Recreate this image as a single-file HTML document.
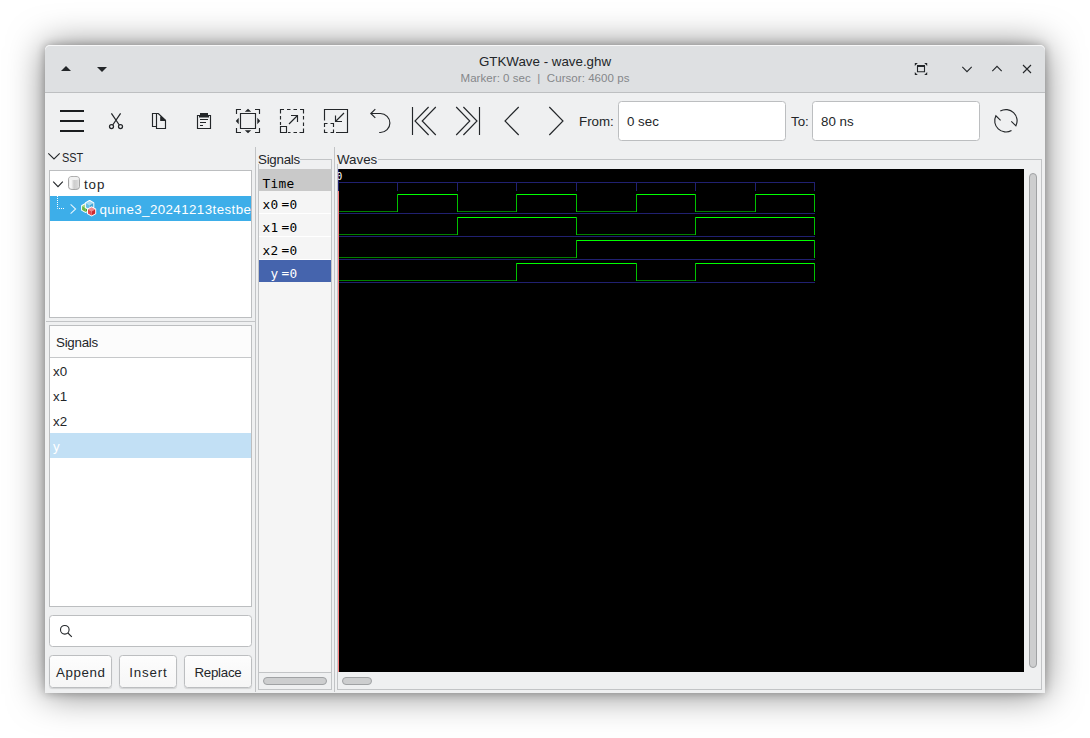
<!DOCTYPE html>
<html lang="en">
<head>
<meta charset="utf-8">
<title>GTKWave - wave.ghw</title>
<style>
html,body{margin:0;padding:0;}
body{width:1090px;height:738px;background:#fff;position:relative;overflow:hidden;
  font-family:"Liberation Sans","DejaVu Sans",sans-serif;font-size:13.33px;color:#232629;}
*{box-sizing:border-box;}
.abs{position:absolute;}
#win{position:absolute;left:45px;top:45px;width:1000px;height:648px;background:#eff0f1;
  border-radius:5px 5px 0 0;box-shadow:0 0 10px rgba(0,0,0,.28), 0 1px 36px rgba(0,0,0,.5);}
#titlebar{position:absolute;left:0;top:0;width:1000px;height:48px;background:#dee0e2;
  border-radius:5px 5px 0 0;border-bottom:1px solid #bdbfc1;box-shadow:inset 0 1px 0 rgba(255,255,255,.75);}
#title{position:absolute;left:0;width:1000px;top:9px;text-align:center;line-height:16px;color:#232629;}
#subtitle{position:absolute;left:0;width:1000px;top:26px;text-align:center;font-size:11.5px;line-height:14px;color:#85878a;white-space:pre;letter-spacing:.05px;}
.lbl{position:absolute;white-space:nowrap;line-height:16px;}
.entry{position:absolute;background:#fff;border:1px solid #bcbec0;border-radius:3.5px;}
.box{position:absolute;background:#fff;border:1px solid #bcbec0;overflow:hidden;}
.btn{position:absolute;background:linear-gradient(#fdfdfd,#f6f6f6);border:1px solid #bcbec0;border-radius:3.5px;text-align:center;line-height:33px;height:33px;top:610px;box-shadow:0 1px 1px rgba(0,0,0,.12);}
svg{position:absolute;overflow:visible;}
.mono{font-family:"DejaVu Sans Mono","Liberation Mono",monospace;font-size:12.8px;letter-spacing:.3px;color:#000;}
.mono .lbl{top:5.5px;}
.vline{position:absolute;width:1px;background:#c2c4c6;}
.hline{position:absolute;height:1px;background:#c2c4c6;}
</style>
</head>
<body>
<div id="win">
  <div id="titlebar">
    <div id="title">GTKWave - wave.ghw</div>
    <div id="subtitle">Marker: 0 sec  |  Cursor: 4600 ps</div>
    <svg style="left:0;top:0" width="1000" height="48" viewBox="45 45 1000 48">
      <path d="M61 71 L66 66 L71 71 Z" fill="#232629"/>
      <path d="M97 67 L107 67 L102 72 Z" fill="#232629"/>
      <g fill="none" stroke="#232629" stroke-width="1.1">
        <path d="M917.5 66 V71.7 H924.5 V66" stroke-width="1.1"/>
        <path d="M917 66 H925" stroke-width="2"/>
        <path d="M914.8 66 V63 H917.8 Z M927.2 66 V63 H924.2 Z M914.8 72 V75 H917.8 Z M927.2 72 V75 H924.2 Z" fill="#232629" stroke="none"/>
        <path d="M962.3 66.9 L967 71.6 L971.7 66.9"/>
        <path d="M992.3 71.1 L997 66.4 L1001.7 71.1"/>
        <path d="M1023 65 L1031 73 M1031 65 L1023 73"/>
      </g>
    </svg>
  </div>
  <!-- toolbar -->
  <svg id="tb" style="left:0;top:48px" width="1000" height="58" viewBox="45 93 1000 58" fill="none" stroke="#232629" stroke-width="1.15">
    <!-- menu -->
    <path d="M60 111 h24 M60 121 h24 M60 131 h24" stroke-width="2" stroke="#1b1e20"/>
    <!-- cut -->
    <g stroke-width="1.25">
      <path d="M111.4 113.3 L119.3 125 M120.6 113.3 L112.7 125"/>
      <circle cx="111.5" cy="126.5" r="2"/>
      <circle cx="120.5" cy="126.5" r="2"/>
    </g>
    <!-- copy -->
    <g>
      <path d="M156.5 126.5 H152.5 V113.5 H158.3 L165.5 120.3 V128.5 H156.5 V113.5"/>
      <path d="M159 113.8 L165.8 120.6 H160.8 V116.2 Z" fill="#232629" stroke="none"/>
      <path d="M160.8 116.5 V120.5 H165.5" />
    </g>
    <!-- paste -->
    <g>
      <path d="M197.5 115.5 H210.5 V128.5 H197.5 Z"/>
      <path d="M200 113 H208 V115 H209 V117.6 H199 V115 H200 Z" fill="#232629" stroke="none"/>
      <path d="M200 119.5 H208 M200 122.5 H206 M200 125.5 H203"/>
    </g>
    <!-- zoom fit -->
    <g>
      <path d="M236.5 114 V109.5 H241 M255 109.5 H259.5 V114 M259.5 128 V132.5 H255 M241 132.5 H236.5 V128"/>
      <path d="M240.5 113.5 H255.5 V128.5 H240.5 Z"/>
      <path d="M244.8 111.7 L248 108.8 L251.2 111.7 Z M244.8 130.3 L248 133.2 L251.2 130.3 Z M238.7 117.8 L235.8 121 L238.7 124.2 Z M257.3 117.8 L260.2 121 L257.3 124.2 Z" fill="#232629" stroke="none"/>
    </g>
    <!-- zoom in -->
    <g>
      <path d="M280.5 113.5 V109.5 H284 M287 109.5 H290.5 M293.5 109.5 H297 M300 109.5 H303.5 V113.5 M303.5 116 V119.5 M303.5 122.5 V126 M303.5 128.5 V132.5 H299.5 M297 132.5 H293.5 M290.5 132.5 H288 M280.5 116 V119.5 M280.5 122 V125"/>
      <path d="M280.5 126.5 H286.5 V132.5 H280.5 Z"/>
      <path d="M289 124 L297.5 115.5 M291 115.5 H297.5 V122"/>
    </g>
    <!-- zoom out -->
    <g>
      <path d="M324.5 120.5 V109.5 H347.5 V132.5 H336"/>
      <path d="M324.5 127 V123.5 H327.5 M330.5 123.5 H333.5 V127 M333.5 129.5 V132.5 H330.5 M327.5 132.5 H324.5 V129.5"/>
      <path d="M344 113 L335.5 121.5 M335.5 115.5 V121.5 H342"/>
    </g>
    <!-- undo -->
    <g>
      <path d="M375.3 109.2 L370.8 113.5 L375.3 117.8 M370.8 113.5 H380.4 A9.5 9.5 0 0 1 380.4 132.5 H379.2"/>
    </g>
    <!-- first / last / prev / next -->
    <path d="M412.5 107 V135 M428.6 107 L415 121 L428.6 135 M435.8 107 L422.2 121 L435.8 135"/>
    <path d="M479.5 107 V135 M463.4 107 L477 121 L463.4 135 M456.2 107 L469.8 121 L456.2 135"/>
    <path d="M518.7 107 L505 121 L518.7 135"/>
    <path d="M549.3 107 L563 121 L549.3 135"/>
    <!-- reload -->
    <g>
      <path d="M1000.3 111.1 A11.2 11.2 0 0 1 1015.92 125.8 L1011.3 121.4"/>
      <path d="M1011.5 130.5 A11.2 11.2 0 0 1 995.88 115.8 L1000.6 120.3"/>
    </g>
  </svg>
  <div class="lbl" style="left:534px;top:69px">From:</div>
  <div class="entry" style="left:573px;top:56px;width:168px;height:40px"><div class="lbl" style="left:8px;top:12px">0 sec</div></div>
  <div class="lbl" style="left:746px;top:69px">To:</div>
  <div class="entry" style="left:767px;top:56px;width:168px;height:40px"><div class="lbl" style="left:8px;top:12px">80 ns</div></div>

  <!-- left pane -->
  <svg style="left:0;top:100px" width="20" height="20" viewBox="45 145 20 20" fill="none" stroke="#232629" stroke-width="1.1"><path d="M48.3 153.4 L54 159 L59.7 153.4"/></svg>
  <div class="lbl" style="left:17px;top:105px;transform:scaleX(.82);transform-origin:0 0">SST</div>
  <div class="box" style="left:4px;top:125px;width:203px;height:148px">
    <svg style="left:0;top:0" width="202" height="50" viewBox="50 171 202 50" fill="none" stroke="#232629" stroke-width="1.1">
      <path d="M53.2 181.6 L58 186.6 L62.8 181.6"/>
      <defs><linearGradient id="cyl" x1="0" x2="1" y1="0" y2="0"><stop offset="0" stop-color="#e4e4e4"/><stop offset=".22" stop-color="#fbfbfb"/><stop offset=".5" stop-color="#cdcdcd"/><stop offset=".8" stop-color="#d6d6d6"/><stop offset="1" stop-color="#eaeaea"/></linearGradient></defs>
      <rect x="68.5" y="176.5" width="11" height="13" rx="3.6" ry="2.8" fill="url(#cyl)" stroke="#a4a4a4" stroke-width="1"/>
      <ellipse cx="74" cy="178.4" rx="4.8" ry="1.6" fill="#f1f1f1" stroke="none"/>
    </svg>
    <div class="lbl" style="left:34px;top:6px;letter-spacing:.9px">top</div>
    <div class="abs" style="left:0;top:25px;width:201px;height:25px;background:#3daee9"></div>
    <svg style="left:0;top:25px" width="60" height="25" viewBox="50 196 60 25" fill="none">
      <path d="M57.5 196 V208.5 H64" stroke="#fff" stroke-width="1" stroke-dasharray="1 1"/>
      <path d="M70.6 204.4 L75.6 209 L70.6 213.6" stroke="#e4f3fc" stroke-width="1.1"/>
      <g><path d="M85.6 203.9 L89.1 205.9 L89.1 209.9 L85.6 211.9 L82.1 209.9 L82.1 205.9 Z" fill="#fff" stroke="#fff" stroke-width="2" stroke-linejoin="round"/><path d="M85.6 203.9 L89.1 205.9 L85.6 207.9 L82.1 205.9 Z" fill="#9fd67f" stroke="none"/><path d="M82.1 205.9 L85.6 207.9 L85.6 211.9 L82.1 209.9 Z" fill="#6ab944" stroke="none"/><path d="M89.1 205.9 L89.1 209.9 L85.6 211.9 L85.6 207.9 Z" fill="#4f9e30" stroke="none"/><path d="M89.6 200.9 L93.3 203.0 L93.3 207.3 L89.6 209.5 L85.9 207.3 L85.9 203.0 Z" fill="#fff" stroke="#fff" stroke-width="2" stroke-linejoin="round"/><path d="M89.6 200.9 L93.3 203.0 L89.6 205.2 L85.9 203.0 Z" fill="#a4dcf3" stroke="none"/><path d="M85.9 203.0 L89.6 205.2 L89.6 209.5 L85.9 207.3 Z" fill="#66bfe6" stroke="none"/><path d="M93.3 203.0 L93.3 207.3 L89.6 209.5 L89.6 205.2 Z" fill="#45a6d6" stroke="none"/><path d="M91.6 207.3 L95.2 209.3 L95.2 213.5 L91.6 215.5 L88.0 213.5 L88.0 209.3 Z" fill="#fff" stroke="#fff" stroke-width="2" stroke-linejoin="round"/><path d="M91.6 207.3 L95.2 209.3 L91.6 211.4 L88.0 209.3 Z" fill="#f08a8e" stroke="none"/><path d="M88.0 209.3 L91.6 211.4 L91.6 215.5 L88.0 213.5 Z" fill="#e2474c" stroke="none"/><path d="M95.2 209.3 L95.2 213.5 L91.6 215.5 L91.6 211.4 Z" fill="#cc2a30" stroke="none"/></g>
    </svg>
    <div class="lbl" style="left:49.5px;top:31px;color:#fff;letter-spacing:.42px">quine3_20241213testbe</div>
  </div>
  <div class="hline" style="left:1px;top:276px;width:210px"></div>
  <div class="box" style="left:4px;top:280px;width:203px;height:282px">
    <div class="abs" style="left:0;top:0;width:201px;height:32px;background:#fcfcfc;border-bottom:1px solid #c6c8ca"></div>
    <div class="lbl" style="left:6px;top:9px;letter-spacing:-.25px">Signals</div>
    <div class="lbl" style="left:3px;top:38px">x0</div>
    <div class="lbl" style="left:3px;top:63px">x1</div>
    <div class="lbl" style="left:3px;top:88px">x2</div>
    <div class="abs" style="left:0;top:107px;width:201px;height:25px;background:#c2e0f5"></div>
    <div class="lbl" style="left:3px;top:113px;color:#fff">y</div>
  </div>
  <div class="entry" style="left:4px;top:570px;width:203px;height:32px">
    <svg style="left:0;top:0" width="40" height="30" viewBox="50 616 40 30" fill="none" stroke="#232629" stroke-width="1.1"><circle cx="64.8" cy="629.8" r="4.3"/><path d="M67.9 633 L71.8 636.8"/></svg>
  </div>
  <div class="btn" style="left:4px;width:63px;letter-spacing:.55px;text-indent:.5px">Append</div>
  <div class="btn" style="left:74px;width:58px;letter-spacing:.85px;text-indent:.8px">Insert</div>
  <div class="btn" style="left:139px;width:68px;letter-spacing:-.27px">Replace</div>

  <!-- separators -->
  <div class="vline" style="left:210px;top:102px;height:545px"></div>
  <div class="vline" style="left:289px;top:102px;height:545px"></div>

  <!-- signals pane -->
  <div class="hline" style="left:255px;top:114px;width:32px"></div>
  <div class="vline" style="left:213px;top:119px;height:526px"></div>
  <div class="vline" style="left:286px;top:114px;height:531px"></div>
  <div class="hline" style="left:213px;top:644px;width:74px"></div>
  <div class="hline" style="left:213px;top:627px;width:74px"></div>
  <div class="lbl" style="left:213px;top:107px;letter-spacing:-.25px">Signals</div>
  <div class="abs" style="left:214px;top:124px;width:72px;height:503px;background:#f5f5f5"></div>
  <div class="abs" style="left:214px;top:168px;width:72px;height:1px;background:#fff"></div><div class="abs" style="left:214px;top:191px;width:72px;height:1px;background:#fff"></div><div class="abs" style="left:214px;top:214px;width:72px;height:1px;background:#fff"></div>
  <div class="abs mono" style="left:214px;top:124px;width:72px;height:22px;background:#c9c9c9"><div class="lbl" style="left:3.4px;top:6.5px">Time</div></div>
  <div class="abs mono" style="left:214px;top:146px;width:72px;height:23px"><div class="lbl" style="left:3.4px">x0</div><div class="lbl" style="left:22.4px;top:4.5px">=</div><div class="lbl" style="left:30.4px">0</div></div>
  <div class="abs mono" style="left:214px;top:169px;width:72px;height:23px"><div class="lbl" style="left:3.4px">x1</div><div class="lbl" style="left:22.4px;top:4.5px">=</div><div class="lbl" style="left:30.4px">0</div></div>
  <div class="abs mono" style="left:214px;top:192px;width:72px;height:23px"><div class="lbl" style="left:3.4px">x2</div><div class="lbl" style="left:22.4px;top:4.5px">=</div><div class="lbl" style="left:30.4px">0</div></div>
  <div class="abs mono" style="left:214px;top:215px;width:72px;height:22px;background:#4564ad;color:#fff"><div class="lbl" style="left:11.4px">y</div><div class="lbl" style="left:22.4px;top:4.5px">=</div><div class="lbl" style="left:30.4px">0</div></div>
  <div class="abs" style="left:218px;top:632px;width:64px;height:8px;border:1px solid #a0a2a4;border-radius:4px;background:#cdcecf"></div>

  <!-- waves -->
  <div class="hline" style="left:333px;top:114px;width:664px"></div>
  <div class="vline" style="left:292px;top:119px;height:526px"></div>
  <div class="vline" style="left:996px;top:114px;height:531px"></div>
  <div class="hline" style="left:292px;top:644px;width:705px"></div>
  <div class="lbl" style="left:292px;top:107px">Waves</div>
  <div class="abs" style="left:293px;top:124px;width:686px;height:503px;background:#000;overflow:hidden">
    <svg style="left:0;top:0" width="686" height="503" viewBox="338 169 686 503" fill="none" shape-rendering="crispEdges">
      <g stroke="#202070" stroke-width="1">
        <path d="M338 182.5 H815 M338 213.5 H815 M338 236.5 H815 M338 259.5 H815 M338 282.5 H815"/>
        <path d="M338.5 169 V191 M397.5 183 V191 M457.5 183 V191 M516.5 183 V191 M576.5 183 V191 M636.5 183 V191 M695.5 183 V191 M755.5 183 V191 M814.5 183 V191"/>
      </g>
      <path d="M338 211.5 H398.0 M457.0 211.5 H517.0 M576.0 211.5 H637.0 M695.0 211.5 H756.0 M338 234.5 H398.0 M397.0 234.5 H458.0 M576.0 234.5 H637.0 M636.0 234.5 H696.0 M338 257.5 H398.0 M397.0 257.5 H458.0 M457.0 257.5 H517.0 M516.0 257.5 H577.0 M338 280.5 H398.0 M397.0 280.5 H458.0 M457.0 280.5 H517.0 M636.0 280.5 H696.0" stroke="#008000" stroke-width="1"/>
      <path d="M397.0 194.5 H458.0 M516.0 194.5 H577.0 M636.0 194.5 H696.0 M755.0 194.5 H815.0 M457.0 217.5 H517.0 M516.0 217.5 H577.0 M695.0 217.5 H756.0 M755.0 217.5 H815.0 M576.0 240.5 H637.0 M636.0 240.5 H696.0 M695.0 240.5 H756.0 M755.0 240.5 H815.0 M516.0 263.5 H577.0 M576.0 263.5 H637.0 M695.0 263.5 H756.0 M755.0 263.5 H815.0" stroke="#00ff00" stroke-width="1"/>
      <path d="M397.5 194.0 V212.0 M457.5 194.0 V212.0 M516.5 194.0 V212.0 M576.5 194.0 V212.0 M636.5 194.0 V212.0 M695.5 194.0 V212.0 M755.5 194.0 V212.0 M814.5 194.0 V212.0 M457.5 217.0 V235.0 M576.5 217.0 V235.0 M695.5 217.0 V235.0 M814.5 217.0 V235.0 M576.5 240.0 V258.0 M814.5 240.0 V258.0 M516.5 263.0 V281.0 M636.5 263.0 V281.0 M695.5 263.0 V281.0 M814.5 263.0 V281.0" stroke="#00c000" stroke-width="1"/>
      <path d="M338.5 191 V672" stroke="#ff8080" stroke-width="1"/>
      <text x="336.3" y="180" fill="#fff" font-family="DejaVu Sans Mono, Liberation Mono, monospace" font-size="10" shape-rendering="auto">0</text>
    </svg>
  </div>
  <div class="abs" style="left:297px;top:632px;width:30px;height:8px;border:1px solid #a0a2a4;border-radius:4px;background:#cdcecf"></div>
  <div class="abs" style="left:984px;top:128px;width:8px;height:495px;border:1px solid #a0a2a4;border-radius:4px;background:#cdcecf"></div>
</div>
</body>
</html>
